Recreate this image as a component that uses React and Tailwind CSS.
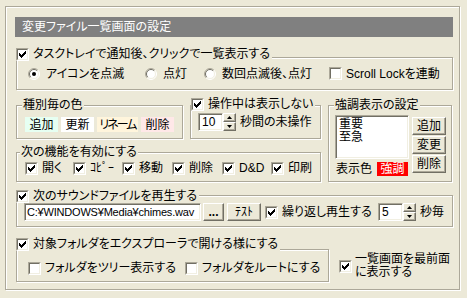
import React from 'react';

// classic Win32 edge styles
const etched = 'border border-[#ACA899] shadow-[inset_1px_1px_0_#fff,1px_1px_0_#fff]';
const sunken =
  'border border-t-[#ACA899] border-l-[#ACA899] border-r-white border-b-white shadow-[inset_1px_1px_0_#716F64,inset_-1px_-1px_0_#F1EFE2] bg-white';
const raised =
  'border border-t-white border-l-white border-r-[#716F64] border-b-[#716F64] shadow-[inset_-1px_-1px_0_#ACA899] bg-[#ECE9D8]';

function Check({ checked }) {
  return (
    <span className="block w-[13px] h-[13px] shrink-0 border border-t-[#ACA899] border-l-[#ACA899] border-r-white border-b-white">
      <span className="block w-[11px] h-[11px] border border-t-[#716F64] border-l-[#716F64] border-r-[#F1EFE2] border-b-[#F1EFE2] bg-white">
        {checked && (
          <svg width="7" height="7" className="block ml-[1px] mt-[1px]" shapeRendering="crispEdges">
            <rect x="0" y="2" width="1" height="3" fill="#000" />
            <rect x="1" y="3" width="1" height="3" fill="#000" />
            <rect x="2" y="4" width="1" height="3" fill="#000" />
            <rect x="3" y="3" width="1" height="3" fill="#000" />
            <rect x="4" y="2" width="1" height="3" fill="#000" />
            <rect x="5" y="1" width="1" height="3" fill="#000" />
            <rect x="6" y="0" width="1" height="3" fill="#000" />
          </svg>
        )}
      </span>
    </span>
  );
}

function Radio({ checked }) {
  return (
    <svg width="12" height="12" className="block shrink-0">
      <circle cx="6" cy="6" r="5" fill="#fff" />
      <path d="M2.11 9.89 A5.5 5.5 0 0 1 9.89 2.11" fill="none" stroke="#ACA899" />
      <path d="M9.89 2.11 A5.5 5.5 0 0 1 2.11 9.89" fill="none" stroke="#fff" />
      <path d="M2.8 9.2 A4.5 4.5 0 0 1 9.2 2.8" fill="none" stroke="#716F64" />
      <path d="M9.2 2.8 A4.5 4.5 0 0 1 2.8 9.2" fill="none" stroke="#F1EFE2" />
      {checked && <circle cx="6" cy="6" r="2" fill="#000" />}
    </svg>
  );
}

function CheckLabel({ checked, className = '', children }) {
  return (
    <div className={`flex items-center gap-[4px] whitespace-nowrap ${className}`}>
      <Check checked={checked} />
      <span>{children}</span>
    </div>
  );
}

function RadioLabel({ checked, className = '', children }) {
  return (
    <div className={`flex items-center gap-[6px] whitespace-nowrap ${className}`}>
      <Radio checked={checked} />
      <span>{children}</span>
    </div>
  );
}

function Group({ className = '', labelClass = '', label, children }) {
  return (
    <div className={`relative ${etched} ${className}`}>
      <div className={`absolute bg-[#ECE9D8] whitespace-nowrap ${labelClass}`}>{label}</div>
      {children}
    </div>
  );
}

function Arrow({ up }) {
  return (
    <svg width="5" height="3" className="block">
      <path d={up ? 'M2.5 0 L5 3 L0 3 Z' : 'M0 0 L5 0 L2.5 3 Z'} fill="#000" />
    </svg>
  );
}

function Spin({ value }) {
  return (
    <div className="flex h-[18px]">
      <div className={`${sunken} w-[25px] h-full pl-[3px] flex items-center`}>{value}</div>
      <div className="flex flex-col w-[13px] h-full">
        <div className={`${raised} h-[9px] flex items-center justify-center`}>
          <Arrow up />
        </div>
        <div className={`${raised} h-[9px] flex items-center justify-center`}>
          <Arrow />
        </div>
      </div>
    </div>
  );
}

function Button({ className = '', children }) {
  return <div className={`${raised} flex items-center justify-center ${className}`}>{children}</div>;
}

export default function App() {
  return (
    <div className="w-[467px] h-[298px] overflow-hidden bg-[#ECE9D8] pt-[6px] pl-[5px] text-[12px] leading-[14px] text-black font-['Liberation_Sans','Noto_Sans_CJK_JP',sans-serif] [font-feature-settings:'palt']">
      <div className={`w-[455px] h-[284px] ${etched} pt-[10px] pl-[9px]`}>
        <div className="w-[438px] h-[20px] bg-[#808080] text-white pl-[7px] flex items-center">
          変更ファイル一覧画面の設定
        </div>

        <div className="pl-[1px]">
          {/* notify */}
          <Group
            className="mt-[20px] w-[437px] h-[33px]"
            labelClass="-left-[1px] -top-[11px] pr-[2px]"
            label={<CheckLabel checked>タスクトレイで通知後、クリックで一覧表示する</CheckLabel>}
          >
            <div className="flex items-center h-full pl-[11px]">
              <RadioLabel checked className="w-[117px]">アイコンを点滅</RadioLabel>
              <RadioLabel className="w-[59px]">点灯</RadioLabel>
              <RadioLabel className="w-[125px]">数回点滅後、点灯</RadioLabel>
              <CheckLabel>Scroll Lockを連動</CheckLabel>
            </div>
          </Group>

          <div className="flex mt-[15px]">
            <div className="w-[305px]">
              <div className="flex">
                <Group
                  className="w-[167px] h-[34px]"
                  labelClass="left-[5px] -top-[8px] px-[1px]"
                  label="種別毎の色"
                >
                  <div className="flex gap-[3px] pt-[11px] pl-[8px] whitespace-nowrap">
                    <div className="w-[33px] h-[15px] bg-[#E6FFF2] flex items-center justify-center">追加</div>
                    <div className="w-[33px] h-[15px] bg-white flex items-center justify-center">更新</div>
                    <div className="w-[41px] h-[15px] bg-[#FFF5DC] flex items-center justify-center tracking-[-2px]">
                      リネーム
                    </div>
                    <div className="w-[33px] h-[15px] bg-[#FFE8E8] flex items-center justify-center">削除</div>
                  </div>
                </Group>
                <Group
                  className="ml-[7px] w-[131px] h-[34px]"
                  labelClass="left-0 -top-[9px] pr-[2px]"
                  label={<CheckLabel checked>操作中は表示しない</CheckLabel>}
                >
                  <div className="flex items-center pt-[7px] pl-[7px]">
                    <Spin value="10" />
                    <span className="ml-[4px] whitespace-nowrap">秒間の未操作</span>
                  </div>
                </Group>
              </div>

              <Group
                className="mt-[13px] w-[305px] h-[30px]"
                labelClass="left-[3px] -top-[8px] px-[1px]"
                label="次の機能を有効にする"
              >
                <div className="flex pt-[8px] pl-[8px]">
                  <CheckLabel checked className="w-[48px]">開く</CheckLabel>
                  <CheckLabel checked className="w-[49px]">ｺﾋﾟｰ</CheckLabel>
                  <CheckLabel checked className="w-[50px]">移動</CheckLabel>
                  <CheckLabel checked className="w-[50px]">削除</CheckLabel>
                  <CheckLabel checked className="w-[49px]">D&amp;D</CheckLabel>
                  <CheckLabel checked>印刷</CheckLabel>
                </div>
              </Group>
            </div>

            <Group
              className="ml-[7px] w-[124px] h-[77px]"
              labelClass="left-[5px] -top-[8px] px-[1px]"
              label="強調表示の設定"
            >
              <div className="flex pt-[9px] pl-[6px]">
                <div className="w-[74px]">
                  <div className={`${sunken} h-[44px] pl-[3px] pt-[2px] leading-[13px]`}>
                    <div>重要</div>
                    <div>至急</div>
                  </div>
                  <div className="flex items-center mt-[3px]">
                    <span className="ml-[1px]">表示色</span>
                    <span className="ml-[5px] w-[31px] h-[14px] bg-[#FF0000] text-white flex items-center justify-center">
                      強調
                    </span>
                  </div>
                </div>
                <div className="ml-[3px] mt-[2px] flex flex-col gap-[1px]">
                  <Button className="w-[34px] h-[18px]">追加</Button>
                  <Button className="w-[34px] h-[18px]">変更</Button>
                  <Button className="w-[34px] h-[18px]">削除</Button>
                </div>
              </div>
            </Group>
          </div>

          {/* sound */}
          <Group
            className="mt-[13px] w-[437px] h-[32px]"
            labelClass="-left-[1px] -top-[7px] pr-[2px]"
            label={<CheckLabel checked>次のサウンドファイルを再生する</CheckLabel>}
          >
            <div className="flex items-center pt-[7px] pl-[7px]">
              <div className={`${sunken} w-[177px] h-[18px] pl-[2px] flex items-center whitespace-nowrap overflow-hidden text-[11px] tracking-[-0.2px]`}>
                C:¥WINDOWS¥Media¥chimes.wav
              </div>
              <Button className="ml-[2px] w-[21px] h-[18px] font-bold">...</Button>
              <Button className="ml-[3px] w-[34px] h-[18px]">ﾃｽﾄ</Button>
              <CheckLabel checked className="ml-[4px] w-[113px]">繰り返し再生する</CheckLabel>
              <Spin value="5" />
              <span className="ml-[4px]">秒毎</span>
            </div>
          </Group>

          {/* folder */}
          <div className="flex items-start mt-[22px]">
            <Group
              className="w-[313px] h-[33px]"
              labelClass="-left-[1px] -top-[13px] pr-[2px]"
              label={<CheckLabel checked>対象フォルダをエクスプローラで開ける様にする</CheckLabel>}
            >
              <div className="flex pt-[11px] pl-[11px]">
                <CheckLabel className="w-[157px]">フォルダをツリー表示する</CheckLabel>
                <CheckLabel>フォルダをルートにする</CheckLabel>
              </div>
            </Group>
            <div className="ml-[10px] mt-[4px] flex items-center gap-[3px]">
              <Check checked />
              <div className="leading-[13px]">
                一覧画面を最前面
                <br />
                に表示する
              </div>
            </div>
          </div>
        </div>
      </div>
    </div>
  );
}
